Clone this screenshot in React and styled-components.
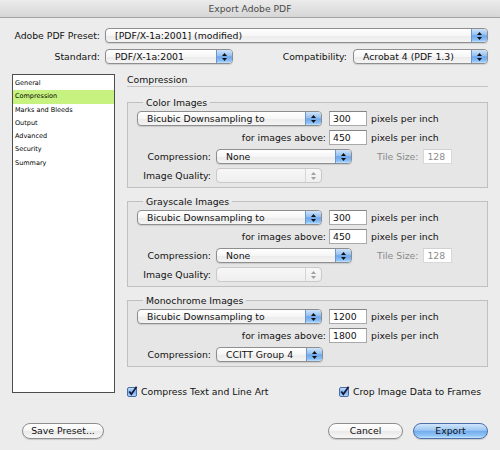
import styled, { createGlobalStyle } from "styled-components";

const GlobalStyle = createGlobalStyle`
  * { box-sizing: border-box; }
  html, body { margin: 0; padding: 0; background: #ececec; }
  body { font-family: "DejaVu Sans", "Liberation Sans", sans-serif; }
`;

//styled-components-------

const Window = styled.div`
  width: 500px;
  height: 450px;
  background: #ececec;
  display: flex;
  flex-direction: column;
  font-size: 9.3px;
  color: #111;
  overflow: hidden;
`;

const TitleBar = styled.div`
  height: 18px;
  flex: none;
  display: flex;
  align-items: center;
  justify-content: center;
  background: linear-gradient(#ececec, #d6d6d6);
  border-bottom: 1px solid #a3a3a3;
  color: #4b4b4b;
  font-size: 9.2px;
`;

const Body = styled.div`
  flex: 1;
  display: flex;
  flex-direction: column;
  padding: 10px 12px 0 12px;
`;

const TopRow = styled.div`
  display: flex;
  align-items: center;
  height: 15px;
  margin-top: ${(p) => p.$mt || 0}px;
`;

const Label = styled.div`
  flex: none;
  width: ${(p) => (p.$w ? p.$w + "px" : "auto")};
  text-align: right;
  padding-right: ${(p) => (p.$pr !== undefined ? p.$pr : 5)}px;
  white-space: nowrap;
  color: ${(p) => (p.$dim ? "#8a8a8a" : "#111")};
  margin-left: ${(p) => p.$ml || 0}px;
`;

const Spacer = styled.div`
  flex: 1;
`;

const SelectBox = styled.div`
  display: flex;
  height: 15px;
  flex: ${(p) => (p.$w ? "none" : "1")};
  width: ${(p) => (p.$w ? p.$w + "px" : "auto")};
  border: 1px solid ${(p) => (p.$disabled ? "#c9c9c9" : "#8e8e8e")};
  border-radius: 4px;
  background: ${(p) =>
    p.$disabled
      ? "linear-gradient(#f7f7f7, #efefef)"
      : "linear-gradient(#ffffff, #f6f6f6 50%, #ebebeb 52%, #f4f4f4)"};
  overflow: hidden;
  box-shadow: ${(p) => (p.$disabled ? "none" : "0 1px 1px rgba(0,0,0,0.12)")};
`;

const SelectText = styled.div`
  flex: 1;
  padding-left: 9px;
  line-height: 13px;
  white-space: nowrap;
  overflow: hidden;
`;

const SelectArrow = styled.div`
  flex: none;
  width: 16px;
  display: flex;
  align-items: center;
  justify-content: center;
  border-left: 1px solid ${(p) => (p.$disabled ? "#d6d6d6" : "#6f95c8")};
  background: ${(p) =>
    p.$disabled
      ? "transparent"
      : "linear-gradient(#cfe3fa, #93c0f1 45%, #6ea6ec 52%, #8cc0f5 85%, #c2e4ff)"};
`;

const Main = styled.div`
  display: flex;
  gap: 12px;
  margin-top: 10px;
`;

const Sidebar = styled.div`
  flex: none;
  width: 103px;
  height: 319px;
  background: #fff;
  border: 1px solid #4d4d4d;
  padding-top: 2px;
`;

const NavItem = styled.div`
  height: 13.3px;
  line-height: 13.3px;
  padding-left: 2px;
  font-size: 6.5px;
  color: #000;
  -webkit-font-smoothing: antialiased;
  background: ${(p) => (p.$active ? "#c8f27f" : "transparent")};
`;

const Panel = styled.div`
  flex: 1;
  min-width: 0;
  display: flex;
  flex-direction: column;
`;

const Heading = styled.div`
  height: 13px;
  line-height: 11px;
  border-bottom: 1px solid #c3c3c3;
  margin-bottom: 10px;
`;

const Group = styled.fieldset`
  margin: 0 0 ${(p) => p.$mb || 0}px 0;
  border: 1px solid #c0c0c0;
  background: #e6e6e6;
  padding: 3px 8px 4px 9px;
  display: flex;
  flex-direction: column;
  gap: 4px;
  min-width: 0;
`;

const Legend = styled.legend`
  margin-left: 6px;
  padding: 0 3px;
  line-height: 11px;
`;

const Row = styled.div`
  display: flex;
  align-items: center;
  height: 15px;
`;

const NumField = styled.div`
  flex: none;
  width: ${(p) => p.$w}px;
  height: 15px;
  margin-left: ${(p) => p.$ml || 0}px;
  background: #fff;
  border: 1px solid ${(p) => (p.$disabled ? "#d7d7d7" : "#a9a9a9")};
  border-top-color: ${(p) => (p.$disabled ? "#d0d0d0" : "#858585")};
  padding-left: 3px;
  line-height: 13px;
  color: ${(p) => (p.$disabled ? "#8c8c8c" : "#111")};
`;

const Unit = styled.div`
  margin-left: 4px;
  white-space: nowrap;
`;

const CheckRow = styled.div`
  display: grid;
  grid-template-columns: 212px 1fr;
  margin-top: 19px;
`;

const CheckItem = styled.label`
  display: flex;
  align-items: center;
  gap: 3px;
  height: 11px;
  white-space: nowrap;
`;

const Footer = styled.div`
  display: flex;
  align-items: center;
  margin-top: 26px;
  padding: 0 0 0 10px;
`;

const PushButton = styled.button`
  flex: none;
  height: 16px;
  width: ${(p) => p.$w}px;
  margin-left: ${(p) => p.$ml || 0}px;
  padding: 0;
  border-radius: 8px;
  border: 1px solid ${(p) => (p.$primary ? "#4c6fa9" : "#8e8e8e")};
  background: ${(p) =>
    p.$primary
      ? "linear-gradient(#d3e6fb, #9cc7f3 45%, #73aced 52%, #92c6f6 85%, #c8e8ff)"
      : "linear-gradient(#ffffff, #f5f5f5 50%, #e9e9e9 52%, #f7f7f7)"};
  font-family: inherit;
  font-size: 9.3px;
  color: #111;
  line-height: 14px;
  box-shadow: 0 1px 1px rgba(0, 0, 0, 0.15);
`;

function Arrows({ disabled }) {
  const c = disabled ? "#a0a0a0" : "#111";
  return (
    <svg width="5" height="8" viewBox="0 0 5 8">
      <polygon points="0,3 2.5,0 5,3" fill={c} />
      <polygon points="0,5 5,5 2.5,8" fill={c} />
    </svg>
  );
}

function Select({ w, value, disabled }) {
  return (
    <SelectBox $w={w} $disabled={disabled}>
      <SelectText>{value}</SelectText>
      <SelectArrow $disabled={disabled}>
        <Arrows disabled={disabled} />
      </SelectArrow>
    </SelectBox>
  );
}

function CheckBox() {
  return (
    <svg width="11" height="11" viewBox="0 0 11 11">
      <defs>
        <linearGradient id="cb" x1="0" y1="0" x2="0" y2="1">
          <stop offset="0" stopColor="#cfe3fa" />
          <stop offset="0.5" stopColor="#79afee" />
          <stop offset="1" stopColor="#b6dcff" />
        </linearGradient>
      </defs>
      <rect x="0.5" y="1.5" width="9" height="9" rx="1.5" fill="url(#cb)" stroke="#4a6da6" />
      <path d="M2.3 5.6 L4.3 8.2 L9.6 0.8" fill="none" stroke="#14183a" strokeWidth="1.7" />
    </svg>
  );
}

function ImageGroup({ title, ppi, above, compression, mono, mb }) {
  return (
    <Group $mb={mb}>
      <Legend>{title}</Legend>
      <Row>
        <Select w={185} value="Bicubic Downsampling to" />
        <NumField $w={38} $ml={7}>{ppi}</NumField>
        <Unit>pixels per inch</Unit>
      </Row>
      <Row>
        <Label $w={192} $pr={3}>for images above:</Label>
        <NumField $w={38}>{above}</NumField>
        <Unit>pixels per inch</Unit>
      </Row>
      <Row>
        <Label $w={79}>Compression:</Label>
        <Select w={mono ? 107 : 136} value={compression} />
        {!mono && (
          <>
            <Label $ml={25} $dim>Tile Size:</Label>
            <NumField $w={29} $disabled>128</NumField>
          </>
        )}
      </Row>
      {!mono && (
        <Row>
          <Label $w={79}>Image Quality:</Label>
          <Select w={106} value="" disabled />
        </Row>
      )}
    </Group>
  );
}

const navItems = ["General", "Compression", "Marks and Bleeds", "Output", "Advanced", "Security", "Summary"];

function App() {
  return (
    <>
      <GlobalStyle />
      <Window>
        <TitleBar>Export Adobe PDF</TitleBar>
        <Body>
          <TopRow>
            <Label $w={93}>Adobe PDF Preset:</Label>
            <Select value="[PDF/X-1a:2001] (modified)" />
          </TopRow>
          <TopRow $mt={6}>
            <Label $w={93}>Standard:</Label>
            <Select w={128} value="PDF/X-1a:2001" />
            <Spacer />
            <Label $pr={6}>Compatibility:</Label>
            <Select w={135} value="Acrobat 4 (PDF 1.3)" />
          </TopRow>
          <Main>
            <Sidebar>
              {navItems.map((n) => (
                <NavItem key={n} $active={n === "Compression"}>{n}</NavItem>
              ))}
            </Sidebar>
            <Panel>
              <Heading>Compression</Heading>
              <ImageGroup title="Color Images" ppi="300" above="450" compression="None" mb={8} />
              <ImageGroup title="Grayscale Images" ppi="300" above="450" compression="None" mb={8} />
              <ImageGroup title="Monochrome Images" ppi="1200" above="1800" compression="CCITT Group 4" mono />
              <CheckRow>
                <CheckItem><CheckBox />Compress Text and Line Art</CheckItem>
                <CheckItem><CheckBox />Crop Image Data to Frames</CheckItem>
              </CheckRow>
            </Panel>
          </Main>
          <Footer>
            <PushButton $w={82}>Save Preset...</PushButton>
            <Spacer />
            <PushButton $w={75}>Cancel</PushButton>
            <PushButton $w={75} $ml={10} $primary>Export</PushButton>
          </Footer>
        </Body>
      </Window>
    </>
  );
}

export default App;
